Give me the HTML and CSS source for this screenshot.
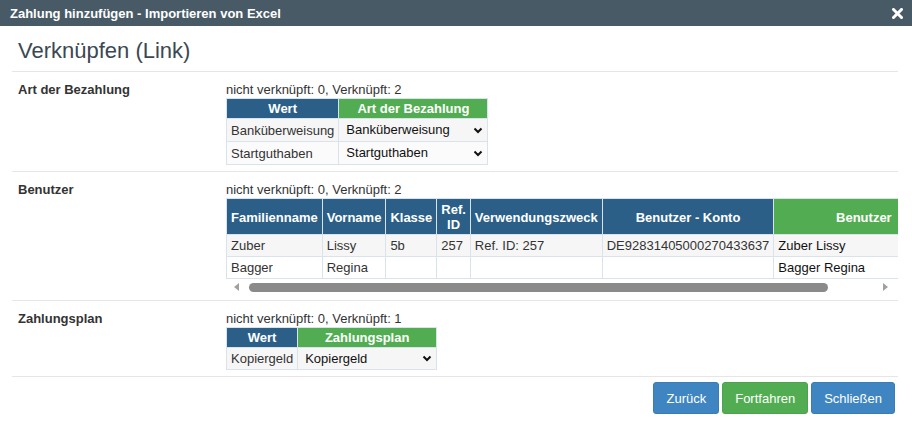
FILE: index.html
```html
<!DOCTYPE html>
<html lang="de">

<head>
    <meta charset="UTF-8">
    <meta name="viewport" content="width=device-width, initial-scale=1.0">
    <title>Zahlung hinzufügen - Importieren von Excel</title>
    <link rel="stylesheet" href="styles.css">
</head>

<body>
    <div class="titlebar">
        <span class="titlebar_text">Zahlung hinzufügen - Importieren von Excel</span>
        <svg class="close" width="11" height="11" viewBox="0 0 11 11">
            <path d="M1.5 1.5 L9.5 9.5 M9.5 1.5 L1.5 9.5" stroke="#fff" stroke-width="3" stroke-linecap="square" />
        </svg>
    </div>

    <div class="content">
        <h2 class="heading">Verknüpfen (Link)</h2>

        <!-- Art der Bezahlung -->
        <div class="section section_first">
            <div class="label">Art der Bezahlung</div>
            <div class="value">
                <div class="info">nicht verknüpft: 0, Verknüpft: 2</div>
                <table class="map">
                    <thead>
                        <tr>
                            <th class="col_blue">Wert</th>
                            <th class="col_green">Art der Bezahlung</th>
                        </tr>
                    </thead>
                    <tbody>
                        <tr>
                            <td>Banküberweisung</td>
                            <td class="sel_cell">
                                <div class="select_box sel_art"><span>Banküberweisung</span>
                                    <svg width="10" height="7" viewBox="0 0 10 7"><path d="M1.5 1.5 L5 5 L8.5 1.5" fill="none" stroke="#111" stroke-width="2" /></svg>
                                </div>
                            </td>
                        </tr>
                        <tr>
                            <td>Startguthaben</td>
                            <td class="sel_cell">
                                <div class="select_box sel_art"><span>Startguthaben</span>
                                    <svg width="10" height="7" viewBox="0 0 10 7"><path d="M1.5 1.5 L5 5 L8.5 1.5" fill="none" stroke="#111" stroke-width="2" /></svg>
                                </div>
                            </td>
                        </tr>
                    </tbody>
                </table>
            </div>
        </div>

        <!-- Benutzer -->
        <div class="section section_wide">
            <div class="label">Benutzer</div>
            <div class="value">
                <div class="info">nicht verknüpft: 0, Verknüpft: 2</div>
                <div class="scroll_wrap">
                    <table class="map users">
                        <thead>
                            <tr>
                                <th class="col_blue">Familienname</th>
                                <th class="col_blue">Vorname</th>
                                <th class="col_blue">Klasse</th>
                                <th class="col_blue">Ref.<br>ID</th>
                                <th class="col_blue">Verwendungszweck</th>
                                <th class="col_blue konto">Benutzer - Konto</th>
                                <th class="col_green user_col">Benutzer</th>
                            </tr>
                        </thead>
                        <tbody>
                            <tr>
                                <td>Zuber</td>
                                <td>Lissy</td>
                                <td>5b</td>
                                <td>257</td>
                                <td>Ref. ID: 257</td>
                                <td>DE92831405000270433637</td>
                                <td class="sel_text">Zuber Lissy</td>
                            </tr>
                            <tr>
                                <td>Bagger</td>
                                <td>Regina</td>
                                <td></td>
                                <td></td>
                                <td></td>
                                <td></td>
                                <td class="sel_text">Bagger Regina</td>
                            </tr>
                        </tbody>
                    </table>
                </div>
                <div class="scrollbar">
                    <svg width="6" height="8" viewBox="0 0 6 8"><path d="M5 0 L5 8 L0 4 Z" fill="#a0a0a0" /></svg>
                    <div class="thumb"></div>
                    <svg width="6" height="8" viewBox="0 0 6 8"><path d="M0 0 L0 8 L5 4 Z" fill="#a0a0a0" /></svg>
                </div>
            </div>
        </div>

        <!-- Zahlungsplan -->
        <div class="section section_last">
            <div class="label">Zahlungsplan</div>
            <div class="value">
                <div class="info">nicht verknüpft: 0, Verknüpft: 1</div>
                <table class="map">
                    <thead>
                        <tr>
                            <th class="col_blue">Wert</th>
                            <th class="col_green">Zahlungsplan</th>
                        </tr>
                    </thead>
                    <tbody>
                        <tr>
                            <td>Kopiergeld</td>
                            <td class="sel_cell">
                                <div class="select_box sel_plan"><span>Kopiergeld</span>
                                    <svg width="10" height="7" viewBox="0 0 10 7"><path d="M1.5 1.5 L5 5 L8.5 1.5" fill="none" stroke="#111" stroke-width="2" /></svg>
                                </div>
                            </td>
                        </tr>
                    </tbody>
                </table>
            </div>
        </div>

        <div class="buttons">
            <button class="btn btn_blue">Zurück</button>
            <button class="btn btn_green">Fortfahren</button>
            <button class="btn btn_blue">Schließen</button>
        </div>
    </div>
</body>

</html>
```

FILE: styles.css
```css
* {
    margin: 0px;
    padding: 0px;
    box-sizing: border-box;
}

body {
    background-color: white;
    font-family: 'Liberation Sans', Arial, sans-serif;
    font-size: 13px;
    color: #333;
}

.titlebar {
    height: 26px;
    background-color: #485a66;
    display: flex;
    justify-content: space-between;
    align-items: center;
    padding: 0 9px 0 10px;
}

.titlebar_text {
    color: white;
    font-weight: bold;
    font-size: 13px;
}

.content {
    padding: 0 14px 0 12px;
}

.heading {
    font-size: 22px;
    font-weight: normal;
    line-height: 26px;
    color: #3b4853;
    padding: 12px 6px 7px;
    border-bottom: 1px solid #e6e6e6;
}

.section {
    display: flex;
    padding: 10px 0 7px;
    border-bottom: 1px solid #e6e6e6;
}

.section_first {
    padding-bottom: 6px;
}

.section_wide {
    padding-bottom: 5px;
}

.section_last {
    padding-bottom: 6px;
}

.label {
    width: 214px;
    flex-shrink: 0;
    padding-left: 6px;
    font-weight: bold;
    line-height: 16px;
    color: #333;
}

.value {
    flex: 1;
    min-width: 0;
}

.info {
    line-height: 16px;
    color: #333;
}

table.map {
    border-collapse: collapse;
    border: 1px solid #d8e3eb;
}

.map th {
    color: white;
    font-weight: bold;
    line-height: 15px;
    padding: 2px 4px;
    text-align: center;
    border: 1px solid #d8e3eb;
    white-space: nowrap;
}

.map td {
    line-height: 15px;
    padding: 3px 4px;
    border: 1px solid #d8e3eb;
    white-space: nowrap;
    background-color: #f6f6f6;
}

.map tbody tr:nth-child(2) td {
    background-color: #fbfbfb;
}

.users tbody tr:nth-child(2) td {
    background-color: white;
}

.col_blue {
    background-color: #2b5f88;
}

.col_green {
    background-color: #52ad52;
}

.sel_cell {
    padding: 3px 4px 3px 7px !important;
}

.select_box {
    display: flex;
    justify-content: space-between;
    align-items: center;
    color: #111;
    line-height: 16px;
}

.sel_art {
    width: 137px;
}

.sel_plan {
    width: 127px;
    line-height: 15px;
}

.scroll_wrap {
    overflow: hidden;
}

.users th {
    padding: 3px 4px 2px;
}

.konto {
    width: 173px;
}

.user_col {
    min-width: 180px;
}

.sel_text {
    color: #111;
}

.scrollbar {
    height: 16px;
    display: flex;
    align-items: center;
    padding: 0 9px 0 8px;
}

.thumb {
    flex: 0 0 579px;
    height: 9px;
    margin-left: 9px;
    margin-right: auto;
    border-radius: 5px;
    background-color: #8a8a8a;
}

.buttons {
    display: flex;
    justify-content: flex-end;
    gap: 3px;
    padding: 5px 3px 0 0;
}

.btn {
    height: 32px;
    padding: 0 12px;
    border: 1px solid transparent;
    border-radius: 3px;
    color: white;
    font-family: 'Liberation Sans', Arial, sans-serif;
    font-size: 13px;
}

.btn_blue {
    background-color: #3f85c1;
    border-color: #3a7cb5;
}

.btn_green {
    background-color: #52ad52;
    border-color: #4ca34c;
}
```
